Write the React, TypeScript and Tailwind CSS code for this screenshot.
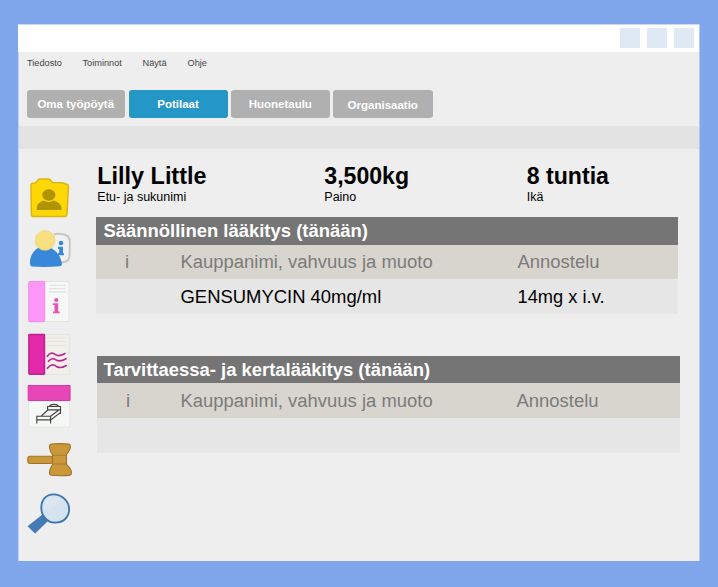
import type { ReactNode } from "react";

const menuItems = [
  { label: "Tiedosto", cell: "w-[55.5px]" },
  { label: "Toiminnot", cell: "w-[60px]" },
  { label: "Näytä", cell: "w-[45px]" },
  { label: "Ohje", cell: "w-[40px]" },
];

const tabs = [
  { label: "Oma työpöytä", look: "w-[98.5px] bg-[#b0b0b0] pt-px" },
  { label: "Potilaat", look: "w-[99px] bg-[#2597c6] pt-px" },
  { label: "Huonetaulu", look: "w-[98.5px] bg-[#b0b0b0] pt-px" },
  { label: "Organisaatio", look: "w-[99.5px] bg-[#b0b0b0] pt-[3px]" },
];

const facts = [
  { value: "Lilly Little", label: "Etu- ja sukunimi", cell: "w-[227px]", size: "text-[23.4px]" },
  { value: "3,500kg", label: "Paino", cell: "w-[202.5px]", size: "text-[23.1px]" },
  { value: "8 tuntia", label: "Ikä", cell: "w-[120px]", size: "text-[23.1px]" },
];

function Icon({ box, height, children }: { box: string; height: string; children: ReactNode }) {
  return (
    <svg viewBox={box} className={`block w-[50px] shrink-0 ${height}`} fill="none">
      {children}
    </svg>
  );
}

function Sidebar() {
  return (
    <nav className="flex w-[71px] shrink-0 flex-col pl-[6px] pt-[26px]">
      <Icon box="25 175 50 50" height="h-[50px]">
        <path
          d="M31 185.5Q31 183.5 33 183.3L35.5 183L38.5 179.5Q39 179 40 179L48.500 179Q50 179 50.500 180L52 182.500L62 182.800L67.500 184.500Q68.500 185 68.400 187L67 214.500Q66.800 216.400 65 216.400L33.500 216.600Q31.500 216.600 31.400 214.500Z"
          fill="#fdd706"
          stroke="#dcb510"
          strokeWidth="1.500"
        />
        <ellipse cx="48.800" cy="195" rx="6.600" ry="5.700" fill="#ae9303" />
        <path
          d="M36.800 209.500C36.500 204.500 39 202 44 200.500Q48.500 203.500 53.500 200.500C59 202 61.800 205 61.600 209.500Q61.500 210 60.500 210L38 210Q36.800 210 36.800 209.500Z"
          fill="#ae9303"
        />
      </Icon>
      <Icon box="25 225 50 50" height="h-[50px]">
        <path
          d="M54 234.500Q57 233.300 63 234.200Q69.800 235.200 69.800 242L69.600 255Q69.500 261.800 63 262.300L60 262.300"
          fill="#f0f0f1"
          stroke="#c9c5c5"
          strokeWidth="1.900"
        />
        <circle cx="61" cy="243" r="2.300" fill="#3887d9" />
        <path d="M58 246.800H63V253.200H64V255.300H58V253.200H59.200V249H58Z" fill="#3887d9" />
        <path
          d="M30 263.500C29.500 257 33 250.500 39 247.500L51 248C57.500 251.500 61 257 62 264Q62 266 60 266.300Q45 267.500 32 266.500Q30.200 266 30 263.500Z"
          fill="#3887d9"
        />
        <circle cx="45" cy="240.500" r="9.800" fill="#f8df80" stroke="#efd36d" strokeWidth=".7" />
      </Icon>
      <Icon box="25 275 50 53" height="h-[53px]">
        <rect x="44.500" y="281.500" width="24.500" height="40" fill="#f6f8f6" stroke="#e2e4e2" />
        <path d="M49 285.300H65.500M49 288.600H65M49 292H65.500" stroke="#e2e4e3" strokeWidth="1.300" />
        <rect x="28.700" y="281.500" width="16" height="40.200" rx=".8" fill="#ff97f9" stroke="#f28ced" />
        <circle cx="56.300" cy="300" r="2.100" fill="#e455b6" />
        <path d="M52.800 303.300H58.200V311.500H59.700V313.300H53V311.500H54.500V305H52.800Z" fill="#e455b6" />
      </Icon>
      <Icon box="25 328 50 52" height="h-[52px]">
        <rect x="44.500" y="334.500" width="24.800" height="40" fill="#f0efea" stroke="#e5e5df" />
        <path d="M47 338H65.500M47 341.500H66M47 345.500H65.500" stroke="#e2e2dd" />
        <rect x="28.900" y="334.500" width="15.600" height="39.800" rx=".7" fill="#e229aa" stroke="#bd238e" strokeWidth="1.500" />
        <path
          d="M47.200 356.300Q51 351 55.500 354.600Q58.500 357 65 353.500M48.500 361.300Q52 356.800 56 360Q60 362.300 66 358.700M47.400 368.300Q51.500 362.500 56.500 366.500Q60.500 369 66.200 365.500"
          stroke="#bd2590"
          strokeWidth="1.600"
          strokeLinecap="round"
        />
      </Icon>
      <Icon box="25 380 50 55" height="h-[55px]">
        <rect x="28.700" y="401" width="41" height="26" fill="#f6f8f6" stroke="#e7e8e7" />
        <rect x="28.300" y="385.500" width="41.700" height="15" rx=".8" fill="#e846b7" stroke="#dd35aa" strokeWidth="1.200" />
        <path
          d="M36.800 423.500V416.200H50.600V423.500M36.800 419.800H50.600M41.300 416L47.800 410M50.600 416.200L58.500 410.200M50.600 420L60.300 412.600M47.600 410.500V406.500H60.500V414M47.600 409.900H60.500M49.500 406.300Q50.500 404.300 54 404.300Q57.500 404.300 58.500 406.300"
          stroke="#444444"
          strokeWidth="1.150"
        />
      </Icon>
      <Icon box="25 435 50 50" height="h-[50px]">
        <rect x="27.800" y="456.200" width="25" height="7.300" rx="2.500" fill="#ca9838" stroke="#9c752a" strokeWidth="1.100" />
        <path
          d="M51.500 444Q60 443.200 68.500 444Q70.600 444.300 70.400 447Q70.200 450 66.500 454.500V464.500Q71.500 469 71.500 472.500Q71.300 475.200 69 475.400Q60 476 51.500 475.300Q49.300 475 49.500 472.500Q49.500 469.500 52.500 464.500V455Q49.500 450.500 49.500 447Q49.300 444.500 51.500 444Z"
          fill="#ca9838"
          stroke="#9c752a"
          strokeWidth="1.100"
        />
        <path d="M52.500 455.300H66.500M52.500 464H66.500" stroke="#a57d31" />
      </Icon>
      <Icon box="25 485 50 55" height="h-[55px]">
        <path d="M42.300 515L47.400 521.300L35 533.300L28 526.300Z" fill="#457bb5" stroke="#3b6ba0" strokeWidth=".6" />
        <path
          d="M53.500 494.400C61.500 494.400 69.100 501 69.100 509C69.100 517.500 63.500 522.600 55 522.600C46.800 522.600 41.300 515.500 41.300 507.500C41.300 499.500 46.500 494.400 53.500 494.400Z"
          fill="#d5e2ef"
          stroke="#3974ad"
          strokeWidth="1.800"
        />
        <path d="M44 510Q43.500 500 50.500 497.500Q59 495.500 62 500Q56 507 44 510Z" fill="#dbe6f1" />
      </Icon>
    </nav>
  );
}

type TableProps = {
  title: string;
  frame: string;
  titleBar: string;
  headRow: string;
  dosageCell: string;
  lead: string;
  name?: string;
  dose?: string;
};

function MedicationTable({ title, frame, titleBar, headRow, dosageCell, lead, name, dose }: TableProps) {
  return (
    <section className={`text-[18.45px] ${frame}`}>
      <h2 className={`bg-[#757575] font-bold leading-[27px] text-white ${titleBar}`}>{title}</h2>
      <div className={`flex bg-[#d8d5ce] text-[#7b7b7b] ${headRow}`}>
        <span className={`shrink-0 pl-[29px] ${lead}`}>i</span>
        <span className={`shrink-0 ${dosageCell}`}>Kauppanimi, vahvuus ja muoto</span>
        <span>Annostelu</span>
      </div>
      <div className="flex h-[35px] bg-[#e6e6e6] leading-[35px] text-black">
        <span className={`shrink-0 ${lead}`} />
        <span className={`shrink-0 ${dosageCell}`}>{name}</span>
        <span className="text-[18.3px]">{dose}</span>
      </div>
    </section>
  );
}

export default function App() {
  return (
    <div className="h-[587px] w-[718px] overflow-hidden whitespace-nowrap bg-[#80a6eb] pl-[18px] pt-[24px] font-['Liberation_Sans',Arial,sans-serif]">
      <div className="flex h-[537px] w-[682px] flex-col border-r border-t border-r-[#b4c8ed] border-t-[#c9d9f7] bg-[#eeeeee]">
        <header className="flex h-[27px] shrink-0 justify-end gap-[7px] bg-white pr-[5px] pt-[3px]">
          <div className="size-5 bg-[#dfe9f4]" />
          <div className="size-5 bg-[#dfe9f4]" />
          <div className="size-5 bg-[#dfe9f4]" />
        </header>
        <div className="flex min-h-0 grow flex-col border-l border-l-[#c0d1f2]">
          <div className="flex h-[38px] shrink-0 pl-[8px] pt-[4px] text-[9.2px] leading-[14px] text-[#444444]">
            {menuItems.map((item) => (
              <span key={item.label} className={item.cell}>
                {item.label}
              </span>
            ))}
          </div>
          <div className="flex h-[36px] shrink-0 gap-[3.500px] pl-[7.500px]">
            {tabs.map((tab) => (
              <div
                key={tab.label}
                className={`flex h-[27.500px] items-center justify-center rounded-[3px] text-[11.5px] font-bold leading-none text-white ${tab.look}`}
              >
                {tab.label}
              </div>
            ))}
          </div>
          <div className="h-[23px] shrink-0 bg-[#e3e3e3]" />
          <main className="flex min-h-0 grow">
            <Sidebar />
            <div className="grow pl-[6px] pt-[13px]">
              <div className="flex h-[55px] pl-[1.300px] text-black">
                {facts.map((fact) => (
                  <div key={fact.label} className={fact.cell}>
                    <div className={`h-7 font-bold leading-7 ${fact.size}`}>{fact.value}</div>
                    <div className="h-[14px] text-[12.5px] leading-[14px]">{fact.label}</div>
                  </div>
                ))}
              </div>
              <MedicationTable
                title="Säännöllinen lääkitys (tänään)"
                frame="w-[582px]"
                titleBar="h-[28px] pl-[7.500px]"
                headRow="h-[34px] leading-[34px]"
                lead="w-[84.500px]"
                dosageCell="w-[337px]"
                name="GENSUMYCIN 40mg/ml"
                dose="14mg x i.v."
              />
              <MedicationTable
                title="Tarvittaessa- ja kertalääkitys (tänään)"
                frame="ml-px mt-[42px] w-[583px]"
                titleBar="h-[27px] pl-[6.500px]"
                headRow="h-[35px] leading-[35px]"
                lead="w-[83.500px]"
                dosageCell="w-[336px]"
              />
            </div>
          </main>
        </div>
      </div>
    </div>
  );
}
